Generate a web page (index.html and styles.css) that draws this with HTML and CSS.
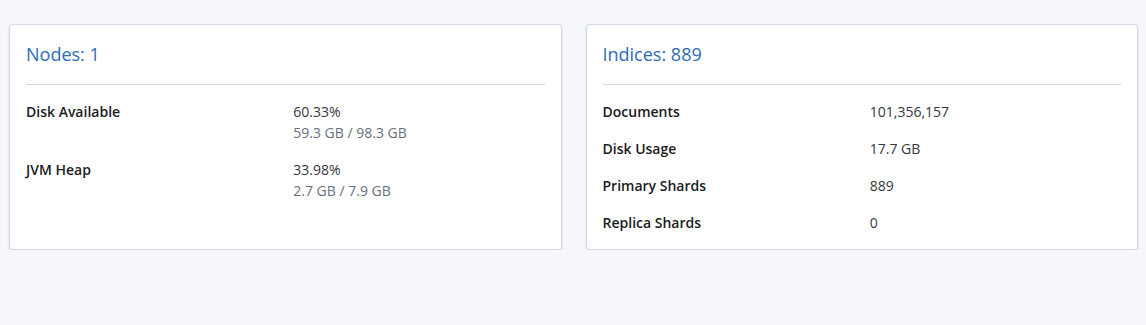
FILE: index.html
```html
<!DOCTYPE html>
<html>
<head>
<meta charset="utf-8">
<link rel="stylesheet" href="styles.css">
</head>
<body>
<div class="page">
  <section class="card">
    <h2 class="card-title">Nodes: 1</h2>
    <div class="divider"></div>
    <dl class="stats">
      <dt>Disk Available</dt>
      <dd><div>60.33%</div><div class="sub">59.3 GB / 98.3 GB</div></dd>
      <dt>JVM Heap</dt>
      <dd><div>33.98%</div><div class="sub">2.7 GB / 7.9 GB</div></dd>
    </dl>
  </section>
  <section class="card">
    <h2 class="card-title">Indices: 889</h2>
    <div class="divider"></div>
    <dl class="stats">
      <dt>Documents</dt>
      <dd>101,356,157</dd>
      <dt>Disk Usage</dt>
      <dd>17.7 GB</dd>
      <dt>Primary Shards</dt>
      <dd>889</dd>
      <dt>Replica Shards</dt>
      <dd>0</dd>
    </dl>
  </section>
</div>
</body>
</html>
```

FILE: styles.css
```css
html, body {
  margin: 0;
  padding: 0;
  background: #f5f7fa;
  font-family: "Open Sans", "Noto Sans", sans-serif;
  font-size: 14px;
  line-height: 21px;
  color: #343741;
}
.page {
  display: grid;
  grid-template-columns: 1fr 1fr;
  gap: 24px;
  padding: 24px 8px 0 9px;
  align-items: stretch;
}
.card {
  background: #fff;
  border: 1px solid #d3dae6;
  border-radius: 4px;
  box-shadow: 0 1px 2px rgba(152, 162, 179, 0.25), 0 1px 5px -2px rgba(152, 162, 179, 0.25);
  padding: 16px;
}
.card-title {
  margin: 0;
  font-size: 18px;
  line-height: 27px;
  font-weight: 400;
  color: #2d6cb4;
}
.divider {
  height: 1px;
  background: #d3dae6;
  margin: 16px 0;
}
.stats {
  margin: 0;
  display: grid;
  grid-template-columns: 1fr 1fr;
  column-gap: 16px;
  row-gap: 16px;
}
.stats dt {
  font-weight: 600;
  color: #1a1c21;
}
.stats dd {
  margin: 0;
  color: #343741;
}
.sub {
  color: #69707d;
}
```
